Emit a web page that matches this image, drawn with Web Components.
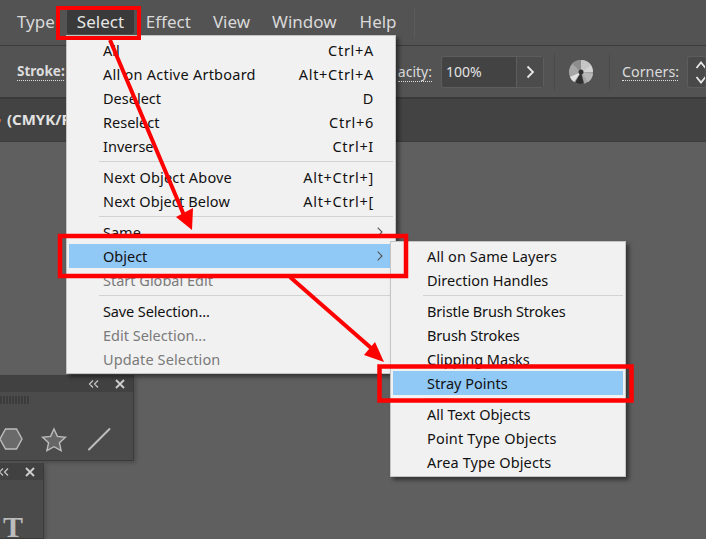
<!DOCTYPE html>
<html>
<head>
<meta charset="utf-8">
<style>
  html, body { margin: 0; height: 100%; overflow: hidden; background: #5f5f5f; }
  body { font-family: "Noto Sans", "Open Sans", sans-serif; }
</style>
</head>
<body>
<app-window>
  <menu-bar slot="menu">
    <bar-item style="margin-left:17px">Type</bar-item>
    <bar-item active style="margin-left:12px">Select</bar-item>
    <bar-item style="margin-left:12px">Effect</bar-item>
    <bar-item style="margin-left:22px">View</bar-item>
    <bar-item style="margin-left:22px">Window</bar-item>
    <bar-item style="margin-left:23px">Help</bar-item>
  </menu-bar>
  <control-bar slot="control"></control-bar>
  <tab-bar slot="tabs">(CMYK/P</tab-bar>

  <float-panel style="left:-60px;top:375px;width:194px;height:86px">
    <svg width="193" height="68" viewBox="-60 392 193 68">
      <path d="M1 396v8M4 396v8M7 396v8M10 396v8M13 396v8M16 396v8M19 396v8M22 396v8M25 396v8M28 396v8" stroke="#2f2f2f" stroke-width="1"/>
      <path d="M0 439l5.500-10h11l5.500 10-5.500 10H5.500z" fill="#6a6a6a" stroke="#bdbdbd" stroke-width="1.400"/>
      <path d="M54 429l3.400 7.400 8 .9-6 5.400 1.700 8-7.100-4-7.100 4 1.700-8-6-5.400 8-.9z" fill="#666" stroke="#bdbdbd" stroke-width="1.400"/>
      <path d="M89 449.500L109.500 429" fill="none" stroke="#bdbdbd" stroke-width="2" stroke-linecap="round"/>
    </svg>
  </float-panel>
  <float-panel style="left:-60px;top:463px;width:104px;height:76px">
    <panel-glyph>T</panel-glyph>
  </float-panel>

  <pop-menu style="left:66px;top:35px;width:330px">
    <menu-row label="All" keys="Ctrl+A"></menu-row>
    <menu-row label="All on Active Artboard" keys="Alt+Ctrl+A" style="--track:.24px"></menu-row>
    <menu-row label="Deselect" keys="D"></menu-row>
    <menu-row label="Reselect" keys="Ctrl+6"></menu-row>
    <menu-row label="Inverse" keys="Ctrl+I"></menu-row>
    <menu-sep></menu-sep>
    <menu-row label="Next Object Above" keys="Alt+Ctrl+]" style="--track:.18px"></menu-row>
    <menu-row label="Next Object Below" keys="Alt+Ctrl+[" style="--track:.12px"></menu-row>
    <menu-sep></menu-sep>
    <menu-row label="Same" sub></menu-row>
    <menu-row label="Object" sub selected></menu-row>
    <menu-row label="Start Global Edit" disabled></menu-row>
    <menu-sep></menu-sep>
    <menu-row label="Save Selection..." style="--track:-.12px"></menu-row>
    <menu-row label="Edit Selection..." disabled></menu-row>
    <menu-row label="Update Selection" disabled style="--track:.12px"></menu-row>
  </pop-menu>

  <pop-menu style="left:390px;top:241px;width:236px">
    <menu-row label="All on Same Layers" style="--track:.12px"></menu-row>
    <menu-row label="Direction Handles"></menu-row>
    <menu-sep></menu-sep>
    <menu-row label="Bristle Brush Strokes" style="--track:-.15px"></menu-row>
    <menu-row label="Brush Strokes" style="--track:-.15px"></menu-row>
    <menu-row label="Clipping Masks"></menu-row>
    <menu-row label="Stray Points" selected></menu-row>
    <menu-sep></menu-sep>
    <menu-row label="All Text Objects"></menu-row>
    <menu-row label="Point Type Objects" style="--track:.17px"></menu-row>
    <menu-row label="Area Type Objects" style="--track:.12px"></menu-row>
  </pop-menu>

  <red-marks></red-marks>
</app-window>

<script>
class AppWindow extends HTMLElement {
  constructor() {
    super();
    this.attachShadow({ mode: 'open' });
    this.shadowRoot.innerHTML = `<style>
      :host { display: flex; flex-direction: column; position: relative; width: 706px; height: 539px; overflow: hidden; background: #5f5f5f; }
    </style>
    <slot name="menu"></slot>
    <slot name="control"></slot>
    <slot name="tabs"></slot>
    <slot></slot>`;
  }
}

class MenuBar extends HTMLElement {
  constructor() {
    super();
    this.attachShadow({ mode: 'open' });
    this.shadowRoot.innerHTML = `<style>
      :host { display: flex; align-items: center; box-sizing: border-box; height: 46px; padding-bottom: 2px; background: #535353; border-bottom: 1px solid #3c3c3c; position: relative; }
      .sep { position: absolute; left: 414px; top: 8px; width: 1px; height: 29px; background: #5c5c5c; }
    </style><slot></slot><div class="sep"></div>`;
  }
}

class BarItem extends HTMLElement {
  constructor() {
    super();
    this.attachShadow({ mode: 'open' });
    this.shadowRoot.innerHTML = `<style>
      :host { display: block; color: #d9d9d9; font-size: 17px; line-height: 25px; }
      :host([active]) { background: #3a3a3a; border-radius: 2px; padding: 0 10px; width: 47px; color: #e6e6e6; }
    </style><slot></slot>`;
  }
}

class ControlBar extends HTMLElement {
  constructor() {
    super();
    this.attachShadow({ mode: 'open' });
    this.shadowRoot.innerHTML = `<style>
      :host { display: flex; align-items: center; box-sizing: border-box; height: 53px; padding-left: 17px; background: #535353; border-bottom: 2px solid #3a3a3a; color: #dcdcdc; font-size: 14px; }
      .lbl { border-bottom: 1px dotted #dcdcdc; line-height: 17px; flex: none; }
      .stroke { font-weight: 700; font-size: 13.500px; width: 47px; white-space: nowrap; }
      .op { margin-left: 292px; width: 76px; text-align: right; flex: none; }
      .field { display: flex; flex: none; margin-left: 9px; width: 103px; height: 32px; box-sizing: border-box; border: 1px solid #5d5d5d; border-radius: 3px; background: #434343; }
      .val { flex: 1; line-height: 30px; padding-left: 4px; color: #e4e4e4; }
      .btn { width: 26px; border-left: 1px solid #5d5d5d; background: #4c4c4c; display: flex; align-items: center; justify-content: center; }
      .div { width: 1px; height: 36px; background: #4a4a4a; flex: none; }
      .sp { width: 18px; height: 32px; margin-left: 9px; box-sizing: border-box; border: 1px solid #5d5d5d; border-right: 0; border-radius: 3px 0 0 3px; background: #494949; flex: none; overflow: hidden; }
      .wheel { flex: none; margin-left: 13px; }
      .corners { margin-left: 12px; width: 56px; white-space: nowrap; font-size: 14.300px; }
    </style>
    <span class="lbl stroke">Stroke:</span>
    <span class="op"><span class="lbl">acity:</span></span>
    <div class="field"><span class="val">100%</span>
      <span class="btn"><svg width="10" height="14" viewBox="0 0 10 14"><path d="M2.500 1.500L8 7l-5.500 5.500" fill="none" stroke="#e8e8e8" stroke-width="1.800"/></svg></span>
    </div>
    <span class="div" style="margin-left:10px"></span>
    <svg class="wheel" width="26" height="26" viewBox="0 0 26 26">
      <circle cx="13" cy="13" r="12" fill="#a6a6a6"/>
      <path d="M13 13L4 4.500A12 12 0 0 1 13 1z" fill="#8d8d8d"/>
      <path d="M13 13V1A12 12 0 0 1 23 6z" fill="#c6c6c6"/>
      <path d="M13 13L23 6A12 12 0 0 1 25 13z" fill="#d4d4d4"/>
      <path d="M13 13L25 15A12 12 0 0 1 20 23z" fill="#b9b9b9"/>
      <path d="M13 13L16 24.600A12 12 0 0 1 7 23.400z" fill="#303030"/>
      <path d="M13 13L6 22.800A12 12 0 0 1 2 18z" fill="#e2e2e2"/>
      <circle cx="13" cy="13" r="2.500" fill="#333"/>
    </svg>
    <span class="div" style="margin-left:15px"></span>
    <span class="lbl corners">Corners:</span>
    <span class="sp"><svg width="17" height="30" viewBox="0 0 17 30"><path d="M8.500 11l4.500-5.500 4.500 5.500M8.500 20l4.500 5.500 4.500-5.500" fill="none" stroke="#e8e8e8" stroke-width="1.800"/></svg></span>`;
  }
}

class TabBar extends HTMLElement {
  constructor() {
    super();
    this.attachShadow({ mode: 'open' });
    this.shadowRoot.innerHTML = `<style>
      :host { display: block; position: relative; box-sizing: border-box; height: 43px; padding-left: 7px; background: #434343; border-bottom: 1px solid #3b3b3b; color: #e2e2e2; font-size: 15px; font-weight: 700; line-height: 41px; white-space: nowrap; }
      :host::before { content: ""; position: absolute; left: 0; top: 20px; width: 1px; height: 3px; background: #b8613a; }
      .tab { display: block; width: 59px; height: 42px; overflow: hidden; }
    </style><span class="tab"><slot></slot></span>`;
  }
}

class FloatPanel extends HTMLElement {
  constructor() {
    super();
    this.attachShadow({ mode: 'open' });
    this.shadowRoot.innerHTML = `<style>
      :host { display: block; position: absolute; box-sizing: border-box; background: #4b4b4b; border-right: 1px solid #3a3a3a; border-bottom: 1px solid #3a3a3a; box-shadow: 2px 2px 4px rgba(0,0,0,.2); }
      .head { display: flex; align-items: center; justify-content: flex-end; gap: 16px; height: 17px; padding-right: 8px; background: #414141; }
      svg { display: block; }
    </style>
    <div class="head">
      <svg width="11" height="8" viewBox="0 0 11 8"><path d="M5 .5L1.500 4 5 7.500M10 .5L6.500 4 10 7.500" fill="none" stroke="#c8c8c8" stroke-width="1.200"/></svg>
      <svg width="10" height="10" viewBox="0 0 10 10"><path d="M1 1l8 8M9 1l-8 8" fill="none" stroke="#cfcfcf" stroke-width="1.800"/></svg>
    </div>
    <slot></slot>`;
  }
}

class PanelGlyph extends HTMLElement {
  constructor() {
    super();
    this.attachShadow({ mode: 'open' });
    this.shadowRoot.innerHTML = `<style>
      :host { display: block; margin: 37px 0 0 63px; font: 700 30px/20px "Liberation Serif", serif; color: #bcbcbc; }
    </style><slot></slot>`;
  }
}

class PopMenu extends HTMLElement {
  constructor() {
    super();
    this.attachShadow({ mode: 'open' });
    this.shadowRoot.innerHTML = `<style>
      :host { display: block; position: absolute; box-sizing: border-box; padding: 2px 0; background: #f1f1f1; border: 1px solid #c4c4c4; box-shadow: 3px 3px 4px rgba(0,0,0,.45); color: #111; font-size: 14.500px; }
    </style><slot></slot>`;
  }
}

class MenuRow extends HTMLElement {
  constructor() {
    super();
    this.attachShadow({ mode: 'open' });
    const label = this.getAttribute('label') || '';
    const keys = this.getAttribute('keys') || '';
    const arrow = this.hasAttribute('sub')
      ? `<svg class="arrow" width="6" height="10" viewBox="0 0 6 10"><path d="M.7.7L5 5 .7 9.300" fill="none" stroke="#555" stroke-width="1.100"/></svg>` : '';
    this.shadowRoot.innerHTML = `<style>
      :host { display: block; height: 24px; }
      .row { display: flex; align-items: center; height: 24px; box-sizing: border-box; margin: 0 2px; padding-left: 34px; white-space: nowrap; position: relative; }
      .label { letter-spacing: var(--track, 0); }
      :host([selected]) .row { background: #90c8f6; }
      :host([disabled]) .row { color: #7a7a7a; }
      .keys { position: absolute; right: 19px; letter-spacing: .7px; }
      .arrow { position: absolute; right: 10px; top: 7px; }
    </style><div class="row"><span class="label">${label}</span><span class="keys">${keys}</span>${arrow}</div>`;
  }
}

class MenuSep extends HTMLElement {
  constructor() {
    super();
    this.attachShadow({ mode: 'open' });
    this.shadowRoot.innerHTML = `<style>
      :host { display: block; box-sizing: border-box; height: 7px; padding-top: 3px; }
      div { height: 1px; margin: 0 2px 0 32px; background: #d2d2d2; }
    </style><div></div>`;
  }
}

class RedMarks extends HTMLElement {
  constructor() {
    super();
    this.attachShadow({ mode: 'open' });
    this.shadowRoot.innerHTML = `<style>
      :host { display: block; position: absolute; inset: 0; pointer-events: none; }
      svg { display: block; }
    </style>
    <svg width="706" height="539" viewBox="0 0 706 539" fill="none" stroke="#f00">
      <rect x="58" y="8" width="81" height="30" stroke-width="4"/>
      <rect x="60" y="236" width="346" height="40" stroke-width="4.500"/>
      <rect x="379.500" y="366.500" width="252" height="34" stroke-width="4.500"/>
      <path d="M110 40L186 220M290 277L378 354" stroke-width="4"/>
      <path d="M192 230L176 217L193 208z" fill="#f00" stroke="none"/>
      <path d="M384 362L364 355L375 342z" fill="#f00" stroke="none"/>
    </svg>`;
  }
}

customElements.define('app-window', AppWindow);
customElements.define('menu-bar', MenuBar);
customElements.define('bar-item', BarItem);
customElements.define('control-bar', ControlBar);
customElements.define('tab-bar', TabBar);
customElements.define('float-panel', FloatPanel);
customElements.define('panel-glyph', PanelGlyph);
customElements.define('pop-menu', PopMenu);
customElements.define('menu-row', MenuRow);
customElements.define('menu-sep', MenuSep);
customElements.define('red-marks', RedMarks);
</script>
</body>
</html>
